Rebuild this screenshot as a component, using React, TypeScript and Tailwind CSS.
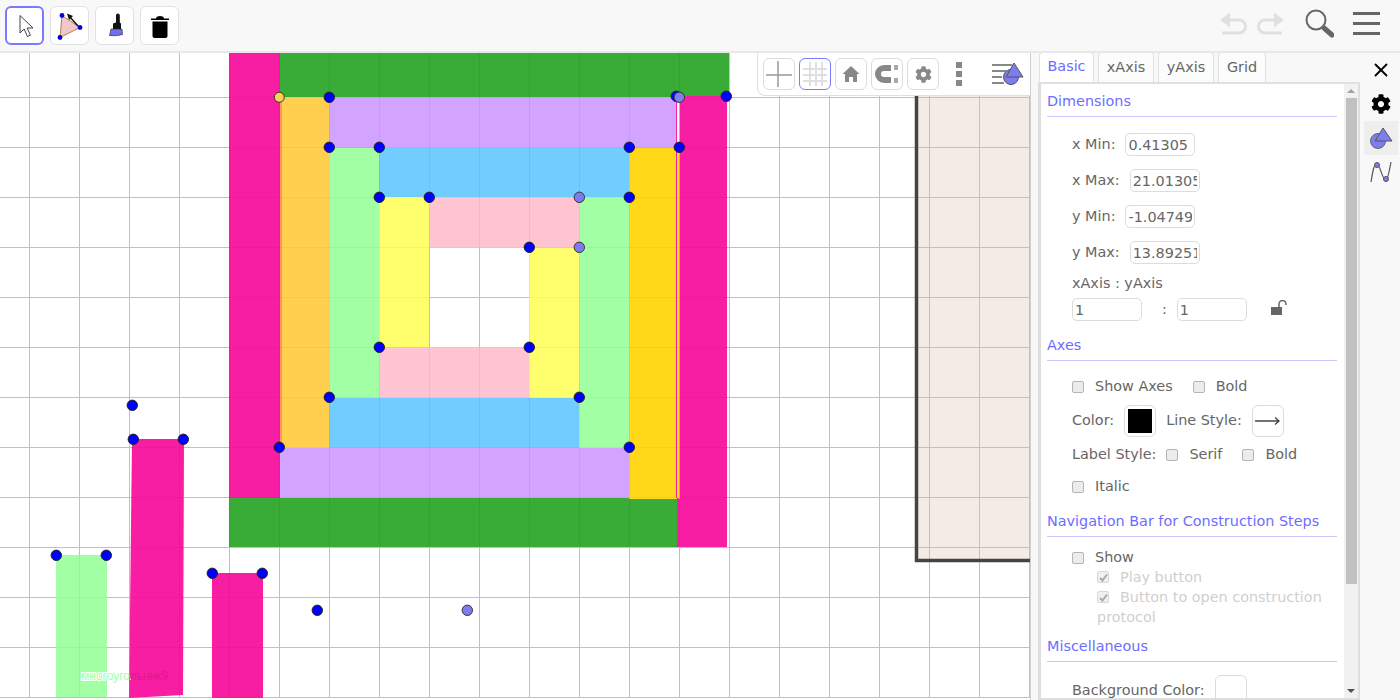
import { FaCog } from 'react-icons/fa'
import { X } from 'lucide-react'
import type { ReactNode } from 'react'

const vLines = Array.from({ length: 21 }, (_, i) => 29.5 + i * 50)
const hLines = Array.from({ length: 13 }, (_, i) => 97.5 + i * 50)

// x, y, w, h in page pixels
const fills: [number, number, number, number, string][] = [
  [229, 53, 51, 445, '#f71ea3'],
  [280, 53, 449, 44, '#38ac36'],
  [329, 97, 347, 51, '#d2a4ff'],
  [281, 97, 48, 351, '#ffd050'],
  [280, 448, 350, 50, '#d2a4ff'],
  [229, 498, 449, 49, '#38ac36'],
  [629, 148, 51, 351, '#ffd919'],
  [680, 96, 47, 403, '#f71ea3'],
  [677, 498, 50, 49, '#f71ea3'],
  [329, 148, 50, 250, '#a3ffa3'],
  [379, 148, 250, 49, '#72cdff'],
  [329, 398, 250, 50, '#72cdff'],
  [579, 197, 50, 251, '#a3ffa3'],
  [379, 197, 50, 150, '#ffff6e'],
  [429, 197, 150, 51, '#ffc4d2'],
  [379, 347, 150, 51, '#ffc4d2'],
  [529, 248, 50, 150, '#ffff6e'],
  [56, 555, 51, 142, '#a3ffa3'],
  [212, 573, 51, 125, '#f71ea3'],
  [280, 97, 2, 351, '#ff9a5a'],
  [676, 97, 1, 401, '#f71ea3'],
  [679, 97, 1, 51, '#f7a0d8'],
  [679, 148, 1, 351, '#ffb030'],
]

const points: [number, number][] = [
  [329, 97], [329, 147], [379, 147], [629, 147], [679, 147], [379, 197], [429, 197], [629, 197],
  [529, 247], [379, 347], [529, 347], [329, 397], [579, 397], [279, 447], [629, 447], [676, 96],
  [726, 96], [132, 405], [133, 439], [183, 439], [56, 555], [106, 555], [212, 573], [262, 573], [317, 610],
]
const lightPoints: [number, number][] = [[679, 97], [579, 197], [579, 247], [467, 610]]

function Board() {
  return (
    <svg viewBox="0 53 1030 647" className="block h-[647px] w-[1030px]">
      <defs>
        <clipPath id="lblA"><rect x="70" y="660" width="37" height="30" /></clipPath>
        <clipPath id="lblB"><rect x="107" y="660" width="24" height="30" /></clipPath>
        <clipPath id="lblC"><rect x="131" y="660" width="50" height="30" /></clipPath>
        <clipPath id="shapes">
          <path clipRule="evenodd" d="M229 53H729V547H229ZM429 248H529V347H429Z" />
          <rect x="56" y="555" width="51" height="142" />
          <rect x="131" y="439" width="53" height="258" />
          <rect x="212" y="573" width="51" height="125" />
        </clipPath>
      </defs>
      <rect x="918" y="53" width="112" height="506" fill="#f3ebe6" />
      {vLines.map((x) => <line key={x} x1={x} x2={x} y1="53" y2="698" stroke="#c0c0c0" />)}
      {hLines.map((y) => <line key={y} x1="0" x2="1030" y1={y} y2={y} stroke="#c0c0c0" />)}
      {fills.map(([x, y, w, h, c]) => <rect key={`${x}-${y}`} x={x} y={y} width={w} height={h} fill={c} />)}
      <polygon points="132,439 184,439 183,695 129,698" fill="#f71ea3" />
      <g clipPath="url(#shapes)">
        {vLines.map((x) => <line key={x} x1={x} x2={x} y1="53" y2="698" stroke="#000" strokeOpacity="0.06" />)}
        {hLines.map((y) => <line key={y} x1="0" x2="1030" y1={y} y2={y} stroke="#000" strokeOpacity="0.04" />)}
      </g>
      <path d="M916.5 96V560.5H1030" fill="none" stroke="#444" strokeWidth="3.5" />
      <text x="81" y="680" fontSize="12" fontFamily="Liberation Sans, sans-serif" fill="#a3ffa3" stroke="#fff" strokeWidth="2" paintOrder="stroke" clipPath="url(#lblA)">многоугольник9</text>
      <text x="81" y="680" fontSize="12" fontFamily="Liberation Sans, sans-serif" fill="#a3ffa3" clipPath="url(#lblB)">многоугольник9</text>
      <text x="81" y="680" fontSize="12" fontFamily="Liberation Sans, sans-serif" fill="#e0188e" clipPath="url(#lblC)">многоугольник9</text>
      <circle cx="279.300" cy="97.300" r="5" fill="#ffd050" stroke="#333" />
      {points.map(([x, y]) => <circle key={`${x}-${y}`} cx={x + 0.3} cy={y + 0.3} r="5.2" fill="#0000ff" stroke="#222" />)}
      {lightPoints.map(([x, y]) => <circle key={`${x}-${y}`} cx={x + 0.3} cy={y + 0.3} r="5.2" fill="#7d7df0" stroke="#333" />)}
    </svg>
  )
}

function ToolBtn({ children, active }: { children: ReactNode; active?: boolean }) {
  return (
    <button className={`flex h-[39px] w-[39px] items-center justify-center rounded-[6px] bg-white ${active ? 'border-2 border-[#7a7aff]' : 'border border-[#e2e2e2]'}`}>
      {children}
    </button>
  )
}

function MiniBtn({ children, active }: { children: ReactNode; active?: boolean }) {
  return (
    <button className={`flex h-8 w-8 items-center justify-center rounded-[6px] bg-white border ${active ? 'border-[#7a7aff]' : 'border-[#dcdcdc]'}`}>
      {children}
    </button>
  )
}

function TopBar() {
  return (
    <div className="flex h-[53px] shrink-0 items-start justify-between border-b-2 border-[#e8e8e8] bg-[#f8f8f8] pt-[6px] pl-[5px]">
      <div className="flex gap-[6px]">
        <ToolBtn active>
          <svg width="24" height="28" viewBox="0 0 24 28">
            <path d="M7 3.500V21l4.200-4 3.200 7.500 3-1.300-3.200-7.200h5.800z" fill="#fff" stroke="#444" strokeWidth="1" />
          </svg>
        </ToolBtn>
        <ToolBtn>
          <svg width="32" height="32" viewBox="0 0 32 32">
            <polygon points="8,5.500 26,17.500 6,27.500" fill="#f0c8c8" stroke="#b08050" />
            <path d="M15 6l9 10" stroke="#111" strokeWidth="1.500" />
            <polygon points="13,3.500 19,6 15,10" fill="#111" />
            <circle cx="8" cy="5.500" r="2.400" fill="#0000e0" />
            <circle cx="26" cy="17.500" r="2.400" fill="#0000e0" />
            <circle cx="6" cy="27.500" r="2.400" fill="#0000e0" />
          </svg>
        </ToolBtn>
        <ToolBtn>
          <svg width="24" height="28" viewBox="0 0 24 28">
            <path d="M13 3.500a1.900 1.900 0 0 1 3.800 0V10.500l1.200 1v6.500h-8v-6.500l3-1z" fill="#111" />
            <path d="M8 17h11l.5 5.500q-6 2-13 1z" fill="#6f6ff0" stroke="#222" strokeWidth=".6" />
          </svg>
        </ToolBtn>
        <ToolBtn>
          <svg width="22" height="28" viewBox="0 0 22 28">
            <path d="M2 6.500h18v1.500H2zM7 6.500q0-2.500 4-2.500t4 2.500z" fill="#000" />
            <path d="M3.500 9.500h15v14.500q0 2-2 2h-11q-2 0-2-2z" fill="#000" />
          </svg>
        </ToolBtn>
      </div>
      <div className="flex items-center gap-[18px] pt-[2px] pr-[20px]">
        <div className="flex gap-2">
          <svg width="30" height="26" viewBox="0 0 30 26" fill="none" stroke="#e0e0e0" strokeWidth="3">
            <path d="M4 10h17a6.500 6.500 0 0 1 0 13H4" />
            <path d="M12 3l-9 7 9 7" fill="#e0e0e0" strokeWidth="1" />
          </svg>
          <svg width="30" height="26" viewBox="0 0 30 26" fill="none" stroke="#e0e0e0" strokeWidth="3">
            <path d="M26 10H9a6.500 6.500 0 0 0 0 13h17" />
            <path d="M18 3l9 7-9 7" fill="#e0e0e0" strokeWidth="1" />
          </svg>
        </div>
        <svg width="30" height="30" viewBox="0 0 30 30" fill="none">
          <circle cx="12" cy="12" r="9.500" stroke="#666" strokeWidth="2" />
          <path d="M20 20l8 7" stroke="#666" strokeWidth="5" strokeLinecap="round" />
        </svg>
        <div className="ml-[1px] flex w-[27px] flex-col gap-[7px]">
          <div className="h-[3px] bg-[#666]" />
          <div className="h-[3px] bg-[#666]" />
          <div className="h-[3px] bg-[#666]" />
        </div>
      </div>
    </div>
  )
}

function StyleBar() {
  return (
    <div className="absolute top-0 left-[757px] flex h-[43px] w-[274px] items-center gap-1 rounded-bl-[8px] border-b border-l border-[#e0e0e0] bg-white pl-[5px]">
      <MiniBtn>
        <svg width="28" height="28" viewBox="0 0 28 28" stroke="#999" strokeWidth="1.500"><path d="M13 1v26M1 15h26" /></svg>
      </MiniBtn>
      <MiniBtn active>
        <svg width="26" height="26" viewBox="0 0 26 26" stroke="#e0e0e0" strokeWidth="2"><path d="M8 1v24M14 1v24M20 1v24M1 8h24M1 14h24M1 20h24" /></svg>
      </MiniBtn>
      <MiniBtn>
        <svg width="18" height="18" viewBox="0 0 18 18" fill="#888"><path d="M9 1L0.500 9H3v8h4v-5h4v5h4V9h2.500z" /></svg>
      </MiniBtn>
      <MiniBtn>
        <svg width="26" height="20" viewBox="0 0 26 20" fill="none"><path d="M17 4H10a6 6 0 0 0 0 12h7" stroke="#888" strokeWidth="6" /><path d="M20 1h4v5h-4zM20 14h4v5h-4z" fill="#aaa" /></svg>
      </MiniBtn>
      <MiniBtn><FaCog className="text-[17px] text-[#888]" /></MiniBtn>
      <div className="flex w-[32px] flex-col items-center gap-[3px]">
        <div className="h-[6px] w-[6px] bg-[#888]" />
        <div className="h-[6px] w-[6px] bg-[#888]" />
        <div className="h-[6px] w-[6px] bg-[#888]" />
      </div>
      <svg width="34" height="26" viewBox="0 0 34 26" className="ml-[12px]">
        <path d="M1 4h20M1 10h14M1 16h10M1 22h12" stroke="#888" strokeWidth="1.800" />
        <circle cx="20" cy="16" r="7.500" fill="#7d7df0" stroke="#555" />
        <polygon points="23,2 32,16 15,16" fill="#7d7df0" stroke="#555" />
      </svg>
    </div>
  )
}

function Section({ title, first }: { title: string; first?: boolean }) {
  return (
    <div className={`${first ? 'mt-[7px]' : ''} mr-[7px] ml-[6px] border-b border-[#c8c8ff] pb-[5px] leading-[20px] text-[#6d6dff]`}>
      {title}
    </div>
  )
}

function Box({ value, ml, w = 'w-[70px]' }: { value: string; ml: string; w?: string }) {
  return (
    <input
      readOnly
      value={value}
      className={`${ml} ${w} h-[23px] rounded-[5px] border border-[#dcdcdc] bg-white px-[2px] text-[#666] outline-none`}
    />
  )
}

function Check({ checked, off }: { checked?: boolean; off?: boolean }) {
  return (
    <span className={`flex h-3 w-3 shrink-0 items-center justify-center rounded-[2px] border ${off ? 'border-[#d8d8d8] bg-[#f0f0f0]' : 'border-[#b5b5b5] bg-[#ececec]'}`}>
      {checked && (
        <svg width="9" height="9" viewBox="0 0 9 9" fill="none" stroke="#aaa" strokeWidth="2"><path d="M1 5l2.500 2.500L8 1.500" /></svg>
      )}
    </span>
  )
}

function Row({ label, value, ml, mt }: { label: string; value: string; ml: string; mt: string }) {
  return (
    <div className={`${mt} flex items-center pl-[31px]`}>
      <span>{label}</span>
      <Box value={value} ml={ml} />
    </div>
  )
}

function Tab({ label, active, w }: { label: string; active?: boolean; w: string }) {
  return (
    <div className={`${w} flex h-[30px] items-center justify-center rounded-t-[4px] border border-[#e0e0e0] ${active ? 'border-b-white bg-white text-[#6d6dff]' : 'border-b-0 bg-[#fcfcfc] text-[#666]'}`}>
      {label}
    </div>
  )
}

function SettingsPanel() {
  return (
    <div className="flex w-[322px] flex-col overflow-hidden text-[14.400px] text-[#666]" style={{ fontFamily: '"DejaVu Sans", sans-serif' }}>
      <div className="flex h-[31px] shrink-0 items-end gap-[4px] border-b-2 border-[#e0e0e0] pl-[1px]">
        <Tab label="Basic" active w="w-[55px]" />
        <Tab label="xAxis" w="w-[56px]" />
        <Tab label="yAxis" w="w-[56px]" />
        <Tab label="Grid" w="w-[48px]" />
      </div>
      <div className="flex min-h-0 flex-1 border-r-2 border-b-2 border-l-[3px] border-[#dedede] bg-white">
        <div className="min-w-0 flex-1 overflow-hidden">
          <Section title="Dimensions" first />
          <Row label="x Min:" value="0.41305" ml="ml-[10px]" mt="mt-[16px]" />
          <Row label="x Max:" value="21.01305" ml="ml-[10px]" mt="mt-[13px]" />
          <Row label="y Min:" value="-1.04749" ml="ml-[10px]" mt="mt-[13px]" />
          <Row label="y Max:" value="13.89251" ml="ml-[10px]" mt="mt-[13px]" />
          <div className="mt-[9px] pl-[31px] leading-[20px]">xAxis : yAxis</div>
          <div className="mt-[5px] flex items-center pl-[31px]">
            <Box value="1" ml="" />
            <span className="ml-[20px]">:</span>
            <Box value="1" ml="ml-[10px]" />
            <svg width="17" height="16" viewBox="0 0 17 16" className="-mt-[4px] ml-[24px]">
              <rect x="0" y="7" width="11" height="8" fill="#666" />
              <path d="M8 7V4a3.500 3.500 0 0 1 7 0v1" fill="none" stroke="#666" strokeWidth="1.500" />
            </svg>
          </div>
          <div className="mt-[14px]"><Section title="Axes" /></div>
          <div className="mt-[16px] flex h-[20px] items-center pl-[31px]">
            <Check /><span className="ml-[11px]">Show Axes</span>
            <span className="ml-[20px]"><Check /></span><span className="ml-[11px]">Bold</span>
          </div>
          <div className="mt-[8px] flex items-center pl-[31px]">
            <span>Color:</span>
            <span className="ml-[10px] flex h-8 w-8 items-center justify-center rounded-[6px] border border-[#dcdcdc]"><span className="h-6 w-6 bg-black" /></span>
            <span className="ml-[10px]">Line Style:</span>
            <span className="ml-[10px] flex h-8 w-8 items-center justify-center rounded-[6px] border border-[#dcdcdc]">
              <svg width="25" height="10" viewBox="0 0 25 10" fill="none" stroke="#444" strokeWidth="1.300"><path d="M0 5h24M20 1.500l4 3.500-4 3.500" /></svg>
            </span>
          </div>
          <div className="mt-[8px] flex h-[20px] items-center pl-[31px]">
            <span>Label Style:</span>
            <span className="ml-[10px]"><Check /></span><span className="ml-[11px]">Serif</span>
            <span className="ml-[20px]"><Check /></span><span className="ml-[11px]">Bold</span>
          </div>
          <div className="mt-[12px] flex h-[20px] items-center pl-[31px]">
            <Check /><span className="ml-[11px]">Italic</span>
          </div>
          <div className="mt-[14px]"><Section title="Navigation Bar for Construction Steps" /></div>
          <div className="mt-[11px] flex h-[20px] items-center pl-[31px]">
            <Check /><span className="ml-[11px]">Show</span>
          </div>
          <div className="-mt-[1px] pl-[56px] leading-[20px] text-[#cfcfcf]">
            <div className="flex items-center"><Check checked off /><span className="ml-[11px]">Play button</span></div>
            <div className="flex items-center"><Check checked off /><span className="ml-[11px]">Button to open construction</span></div>
            <div>protocol</div>
          </div>
          <div className="mt-[9px]"><Section title="Miscellaneous" /></div>
          <div className="mt-[13px] flex items-start pl-[31px]">
            <span className="mt-[5px]">Background Color:</span>
            <span className="ml-[10px] h-8 w-8 shrink-0 rounded-[6px] border border-[#dcdcdc]" />
          </div>
        </div>
        <div className="relative w-[14px] shrink-0 bg-[#f1f1f1]">
          <div className="mx-auto mt-[5px] h-0 w-0 border-x-[4px] border-b-[4px] border-x-transparent border-b-[#a0a0a0]" />
          <div className="mx-auto mt-[5px] h-[486px] w-[11px] bg-[#c1c1c1]" />
          <div className="absolute bottom-[5px] left-[3px] h-0 w-0 border-x-[4px] border-t-[4px] border-x-transparent border-t-[#505050]" />
        </div>
      </div>
    </div>
  )
}

function SideStrip() {
  return (
    <div className="flex w-[40px] flex-col items-center bg-[#f8f8f8] pt-[6px] pl-[2px]">
      <X size={22} strokeWidth={2} className="text-black" />
      <FaCog className="mt-[13px] text-[20px] text-black" />
      <div className="mt-[7px] flex h-[34px] w-[34px] items-center justify-center bg-[#eeeeee]">
        <svg width="24" height="24" viewBox="0 0 24 24">
          <circle cx="9" cy="15" r="7.500" fill="#7d7df0" stroke="#666" />
          <polygon points="14,2 23,15 6,15" fill="#7d7df0" stroke="#555" />
        </svg>
      </div>
      <svg width="24" height="24" viewBox="0 0 24 24" fill="none" className="mt-[5px]">
        <path d="M2 22C4 10 5 4 8 4c3 0 5 16 9 16 2 0 3-8 5-18" stroke="#555" strokeWidth="1.200" />
        <circle cx="8" cy="5" r="2.500" fill="#7d7df0" stroke="#555" />
        <circle cx="17" cy="19" r="2.500" fill="#7d7df0" stroke="#555" />
      </svg>
    </div>
  )
}

export default function App() {
  return (
    <div className="flex h-[700px] w-[1400px] flex-col overflow-hidden bg-[#f8f8f8]">
      <TopBar />
      <div className="flex min-h-0 flex-1">
        <div className="relative w-[1030px] shrink-0 overflow-hidden bg-white">
          <Board />
          <StyleBar />
        </div>
        <div className="w-2 shrink-0 border-l border-[#d0d0d0] bg-[#f8f8f8]" />
        <SettingsPanel />
        <SideStrip />
      </div>
    </div>
  )
}
